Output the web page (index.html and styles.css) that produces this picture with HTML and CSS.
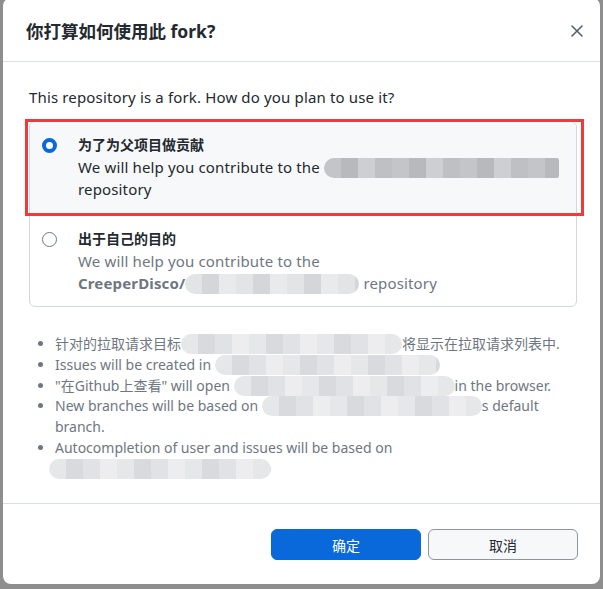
FILE: index.html
```html
<!DOCTYPE html>
<html lang="zh">
<head>
<meta charset="utf-8">
<title>Fork</title>
<link rel="stylesheet" href="styles.css">
</head>
<body>
<div class="dialog">
  <div class="header">
    <h1 class="title">你打算如何使用此 fork?</h1>
    <button class="close" aria-label="关闭">
      <svg width="16" height="16" viewBox="0 0 16 16"><path d="M3 3 L13 13 M13 3 L3 13" stroke="#57606a" stroke-width="1.6" stroke-linecap="round"/></svg>
    </button>
  </div>
  <div class="content">
    <p class="intro">This repository is a fork. How do you plan to use it?</p>
    <div class="group">
      <label class="option selected">
        <span class="radio on"></span>
        <span class="opt-text">
          <span class="opt-title">为了为父项目做贡献</span>
          <span class="opt-desc">We will help you contribute to the <span class="blur dark w235"></span> repository</span>
        </span>
      </label>
      <label class="option second">
        <span class="radio"></span>
        <span class="opt-text">
          <span class="opt-title">出于自己的目的</span>
          <span class="opt-desc muted">We will help you contribute to the <span class="nowrap"><b>CreeperDisco/</b><span class="blur light w174"></span></span> repository</span>
        </span>
      </label>
      <div class="highlight"></div>
    </div>
    <ul class="notes">
      <li>针对的拉取请求目标<span class="blur pale w221"></span>将显示在拉取请求列表中.</li>
      <li>Issues will be created in <span class="blur pale w225"></span></li>
      <li>"在Github上查看" will open <span class="blur pale w221"></span>in the browser.</li>
      <li>New branches will be based on <span class="blur pale w220"></span>s default branch.</li>
      <li>Autocompletion of user and issues will be based on <span class="blur pale w222 shift"></span></li>
    </ul>
  </div>
  <div class="footer">
    <button class="btn primary">确定</button>
    <button class="btn">取消</button>
  </div>
</div>
</body>
</html>
```

FILE: styles.css
```css
* { box-sizing: border-box; }
html, body { margin: 0; padding: 0; }
body {
  background: #8e8e8e;
  font-family: "Noto Sans", "Noto Sans CJK SC", sans-serif;
  color: #24292f;
  height: 589px;
  overflow: hidden;
}
.dialog {
  margin: -2px 3px 0 3px;
  height: 586px;
  background: #ffffff;
  border-radius: 8px;
  display: flex;
  flex-direction: column;
}
.header {
  flex: none;
  height: 64px;
  padding: 2px 15px 0 23px;
  border-bottom: 1px solid #d8dee4;
  display: flex;
  align-items: center;
  justify-content: space-between;
}
.title {
  margin: 0;
  font-size: 17.5px;
  font-weight: 700;
  color: #24292f;
}
.close {
  border: 0;
  background: transparent;
  padding: 0;
  width: 16px;
  height: 16px;
  display: flex;
}
.content {
  flex: 1;
  min-height: 0;
  padding: 0 23px 0 26px;
}
.intro {
  margin: 24px 0 0;
  font-size: 15px;
  line-height: 22px;
  letter-spacing: 0.15px;
}
.group {
  position: relative;
  margin-top: 13px;
  border: 1px solid #d0d7de;
  border-radius: 6px;
  width: 548px;
}
.option {
  display: flex;
  align-items: flex-start;
  padding: 13px 16px 14px 12px;
}
.option.selected {
  background: #f6f8fa;
  border-bottom: 1px solid #d0d7de;
  border-radius: 6px 6px 0 0;
  padding-bottom: 14px;
}
.option.second {
  padding-top: 14px;
  padding-bottom: 12px;
}
.radio {
  flex: none;
  width: 15px;
  height: 15px;
  margin-top: 3px;
  border: 1px solid #6e7781;
  border-radius: 50%;
  background: #fff;
}
.radio.on {
  border: 4px solid #0969da;
}
.opt-text {
  display: flex;
  flex-direction: column;
  margin-left: 21px;
}
.opt-title {
  font-size: 14px;
  font-weight: 700;
  line-height: 20px;
  margin-bottom: 1px;
}
.opt-desc {
  font-size: 15px;
  line-height: 22px;
  letter-spacing: 0.15px;
}
.opt-desc.muted { color: #6e7781; }
.opt-desc b { color: #6e7781; font-weight: 700; }
.nowrap { white-space: nowrap; }
.blur {
  display: inline-block;
  height: 20px;
  vertical-align: -5px;
  border-radius: 10px;
}
.blur.dark {
  background: repeating-linear-gradient(90deg, #c4c5c8 0 17px, #b8b9bc 17px 34px, #cdcfd2 34px 51px, #bfc0c3 51px 68px);
  border-radius: 10px 2px 2px 10px;
}
.blur.light {
  background: repeating-linear-gradient(90deg, #e3e4e6 0 17px, #d4d6d9 17px 34px, #e9eaec 34px 51px);
}
.blur.pale {
  background: repeating-linear-gradient(90deg, #e6e7e9 0 17px, #d9dadd 17px 34px, #e1e2e5 34px 51px, #ededef 51px 68px);
}
.w235 { width: 235px; }
.w174 { width: 174px; }
.w221 { width: 221px; }
.w225 { width: 225px; }
.w220 { width: 220px; }
.w222 { width: 222px; }
.shift { margin-left: -6px; }
.highlight {
  position: absolute;
  left: -5px;
  top: -3px;
  width: 559px;
  height: 97px;
  border: 3px solid #ee3a3a;
  pointer-events: none;
}
.notes {
  margin: 27px 0 0;
  padding: 0 0 0 26px;
  width: 546px;
  font-size: 14px;
  line-height: 20.8px;
  color: #6e7781;
}
.footer {
  flex: none;
  height: 81px;
  border-top: 1px solid #d8dee4;
  display: flex;
  justify-content: flex-end;
  align-items: flex-start;
  gap: 7px;
  padding: 25px 22px 0 0;
}
.btn {
  width: 150px;
  height: 31px;
  border: 1px solid #8c959f;
  border-radius: 6px;
  background: #f6f8fa;
  font-family: inherit;
  font-size: 14px;
  color: #24292f;
}
.btn.primary {
  background: #0969da;
  border-color: #0969da;
  color: #ffffff;
}
```
